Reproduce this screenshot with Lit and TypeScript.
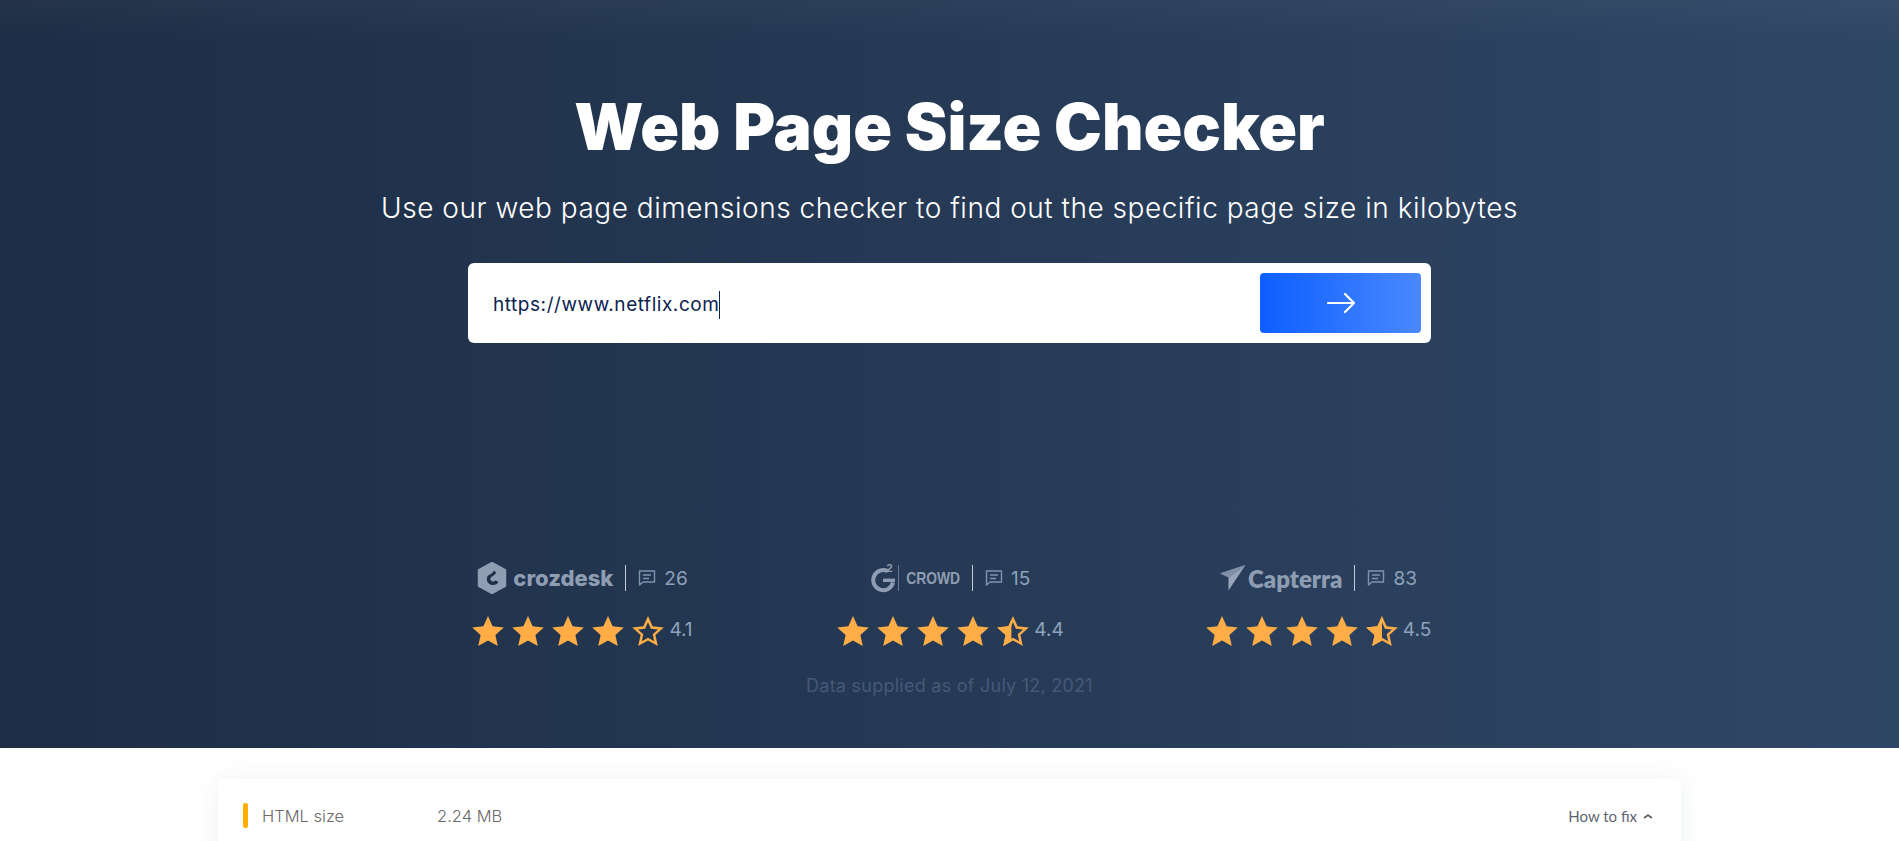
import { LitElement, html, css, svg } from "lit";
import { customElement } from "lit/decorators.js";

const STAR = "M16 1l4.6 10.3 11.2 1.2-8.4 7.5 2.4 11L16 25.4 6.2 31l2.4-11L.2 12.5l11.2-1.2z";
const INNER = "M16 7.200l-2.900 6.500-7.100.8 5.300 4.800-1.500 7L16 22.800l6.200 3.500-1.500-7 5.300-4.800-7.100-.8z";

function star(fill: number) {
  if (fill >= 1) return html`<svg class="star" viewBox="0 0 32 32"><path d=${STAR} fill="#ffad46"></path></svg>`;
  const id = `c${Math.round(fill * 100)}`;
  return html`<svg class="star" viewBox="0 0 32 32">
    <path d="${STAR} ${INNER}" fill="#ffad46" fill-rule="evenodd"></path>
    ${fill > 0 ? svg`<clipPath id=${id}><rect width=${32 * fill} height="32"></rect></clipPath>
      <path d=${STAR} fill="#ffad46" clip-path="url(#${id})"></path>` : ""}
  </svg>`;
}

const comment = html`<svg class="cmt" viewBox="0 0 18 18" fill="none" stroke="currentColor" stroke-width="1.4">
  <path d="M1.500 2h15v11H5l-3.500 3z" stroke-linejoin="round"></path><path d="M5 6h8M5 9.500h6"></path></svg>`;

const crozIcon = html`<svg class="li" width="30" height="32" viewBox="0 0 30 32">
  <path d="M15 0.500 28.500 8v16L15 31.500 1.500 24V8z" fill="#8f9db2" stroke="#8f9db2" stroke-linejoin="round" stroke-width="1.500"></path>
  <path d="M17 8.500c-1 2-3.200 3.500-5 4.500-1.600 1-2.200 2.500-2.200 4 0 3.500 2.700 6 6.200 6 2.500 0 4.500-1.200 5.500-3l-3.200-1.800c-.5.8-1.300 1.300-2.300 1.300-1.500 0-2.600-1.100-2.600-2.500 0-1 .6-1.700 1.400-2.200 1.500-.9 3.500-2.300 4.500-4z" fill="#1f3049"></path>
</svg>`;
const g2Icon = html`<svg class="li" width="32" height="32" viewBox="0 0 32 32">
  <path d="M17 9.300a10 10 0 1 0 5 11.200" fill="none" stroke="#8f9db2" stroke-width="4"></path>
  <path d="M12 18.300h12" stroke="#8f9db2" stroke-width="3.400"></path>
  <text x="15.500" y="10" font-family="Liberation Sans" font-size="11" font-weight="700" fill="#8f9db2">2</text>
  <path d="M27.500 3v26" stroke="#66778f" stroke-width="1"></path>
</svg>`;
const capIcon = html`<svg class="li" width="26" height="26" viewBox="0 0 26 26">
  <path d="M0 8.500h11.500L25.500 0z" fill="#97a5b8"></path>
  <path d="M0 8.500l8.500 4L25.500 0z" fill="#8190a6"></path>
  <path d="M8.500 12.500v13L25.500 0z" fill="#97a5b8"></path>
</svg>`;

const data = [
  { icon: crozIcon, name: "crozdesk", cls: "croz", count: "26", stars: [1, 1, 1, 1, 0], score: "4.1" },
  { icon: g2Icon, name: "CROWD", cls: "crowd", count: "15", stars: [1, 1, 1, 1, 0.45], score: "4.4" },
  { icon: capIcon, name: "Capterra", cls: "cap", count: "83", stars: [1, 1, 1, 1, 0.5], score: "4.5" },
];

@customElement("app-root")
export class AppRoot extends LitElement {
  static styles = css`
    :host { display: block; height: 841px; overflow: hidden; background: #fff; font-family: "Inter", "Liberation Sans", sans-serif; }
    .hero { height: 748px; box-sizing: border-box; padding-top: 87px; display: flex; flex-direction: column; align-items: center;
      background: linear-gradient(90deg, #1d2d45 0%, #2f4766 100%); position: relative; }
    .hero::before { content: ""; position: absolute; left: 0; right: 0; top: 0; height: 40px;
      background: linear-gradient(180deg, rgba(255,255,255,.03), rgba(255,255,255,0)); }
    h1 { margin: 0; color: #fff; font-size: 64px; line-height: 80px; font-weight: 900; letter-spacing: 0; position: relative; }
    .sub { margin: 23px 0 0; color: #fff; font-size: 28px; line-height: 36px; font-weight: 300; letter-spacing: .52px; }
    .box { width: 963px; height: 80px; margin-top: 37px; box-sizing: border-box; padding: 10px; padding-left: 25px; background: #fff; border-radius: 6px; display: flex; align-items: center; justify-content: space-between; }
    .url { color: #0d2350; font-size: 19px; line-height: 28px; margin-top: 4px; border-right: 1.500px solid #0d2350; letter-spacing: .55px; }
    .go { width: 161px; height: 60px; border-radius: 4px; background: linear-gradient(90deg, #0d5fff, #4a88ff); display: flex; align-items: center; justify-content: center; }
    .ratings { margin: 219px 0 0 2px; width: 1104px; display: grid; grid-template-columns: repeat(3, 368px); }
    .rate { display: flex; flex-direction: column; align-items: center; gap: 21px; }
    .top { display: flex; align-items: center; height: 32px; color: #8ea3bb; font-size: 19px; }
    .li { display: block; flex: none; }
    .brand { color: #8f9db2; font-weight: 700; margin-left: 6px; }
    .croz { font-size: 22px; letter-spacing: 0; font-weight: 800; }
    .crowd { font-family: "Liberation Sans", sans-serif; font-size: 16.500px; margin: 0 -5px 0 -2px; transform: scaleX(.84); }
    .cap { font-size: 24px; letter-spacing: 0; margin-left: 2px; font-family: "Lato", sans-serif; font-weight: 800; }
    .div { width: 1px; height: 26px; background: #c3cdd9; margin: 0 12px; }
    .cmt { width: 18px; height: 18px; margin-right: 8px; color: #7f94ae; }
    .stars { display: flex; align-items: center; gap: 8px; height: 32px; color: #8ea3bb; font-size: 19px; }
    .star { width: 32px; height: 32px; display: block; flex: none; }
    .score { margin-left: -3px; margin-top: -3px; }
    .note { margin: 27px 0 0; font-size: 18px; line-height: 24px; letter-spacing: .25px; color: #44597a; }
    .card { width: 1463px; margin: 31px auto 0; height: 120px; box-sizing: border-box; background: #fff; border-radius: 6px; box-shadow: 0 0 24px rgba(30,50,80,.07); padding: 24px 25px 0; }
    .row { display: flex; align-items: center; height: 25px; color: #6a6a6a; font-size: 16.500px; font-weight: 300; }
    .bar { width: 5px; height: 25px; border-radius: 2px; background: #ffb000; margin-right: 14px; }
    .lab { width: 175px; }
    .val { flex: 1; }
    .fix { font-family: "Lato", sans-serif; font-weight: 400; font-size: 15px; color: #5e6570; display: flex; align-items: center; gap: 6px; margin-right: 3px; }
  `;

  render() {
    return html`
      <section class="hero">
        <h1>Web Page Size Checker</h1>
        <p class="sub">Use our web page dimensions checker to find out the specific page size in kilobytes</p>
        <div class="box">
          <span class="url">https://www.netflix.com</span>
          <div class="go">
            <svg width="30" height="22" viewBox="0 0 30 22" fill="none" stroke="#fff" stroke-width="2.200" stroke-linecap="round" stroke-linejoin="round"><path d="M2 11h26M19 2l9 9-9 9"></path></svg>
          </div>
        </div>
        <div class="ratings">
          ${data.map(d => html`<div class="rate">
            <div class="top">${d.icon}<span class="brand ${d.cls}">${d.name}</span><span class="div"></span>${comment}<span>${d.count}</span></div>
            <div class="stars">${d.stars.map(star)}<span class="score">${d.score}</span></div>
          </div>`)}
        </div>
        <p class="note">Data supplied as of July 12, 2021</p>
      </section>
      <div class="card">
        <div class="row">
          <span class="bar"></span><span class="lab">HTML size</span><span class="val">2.24 MB</span>
          <span class="fix">How to fix <svg width="10" height="6" viewBox="0 0 10 6" fill="none" stroke="#5e6570" stroke-width="1.800"><path d="M1 5l4-3 4 3"></path></svg></span>
        </div>
      </div>
    `;
  }
}
